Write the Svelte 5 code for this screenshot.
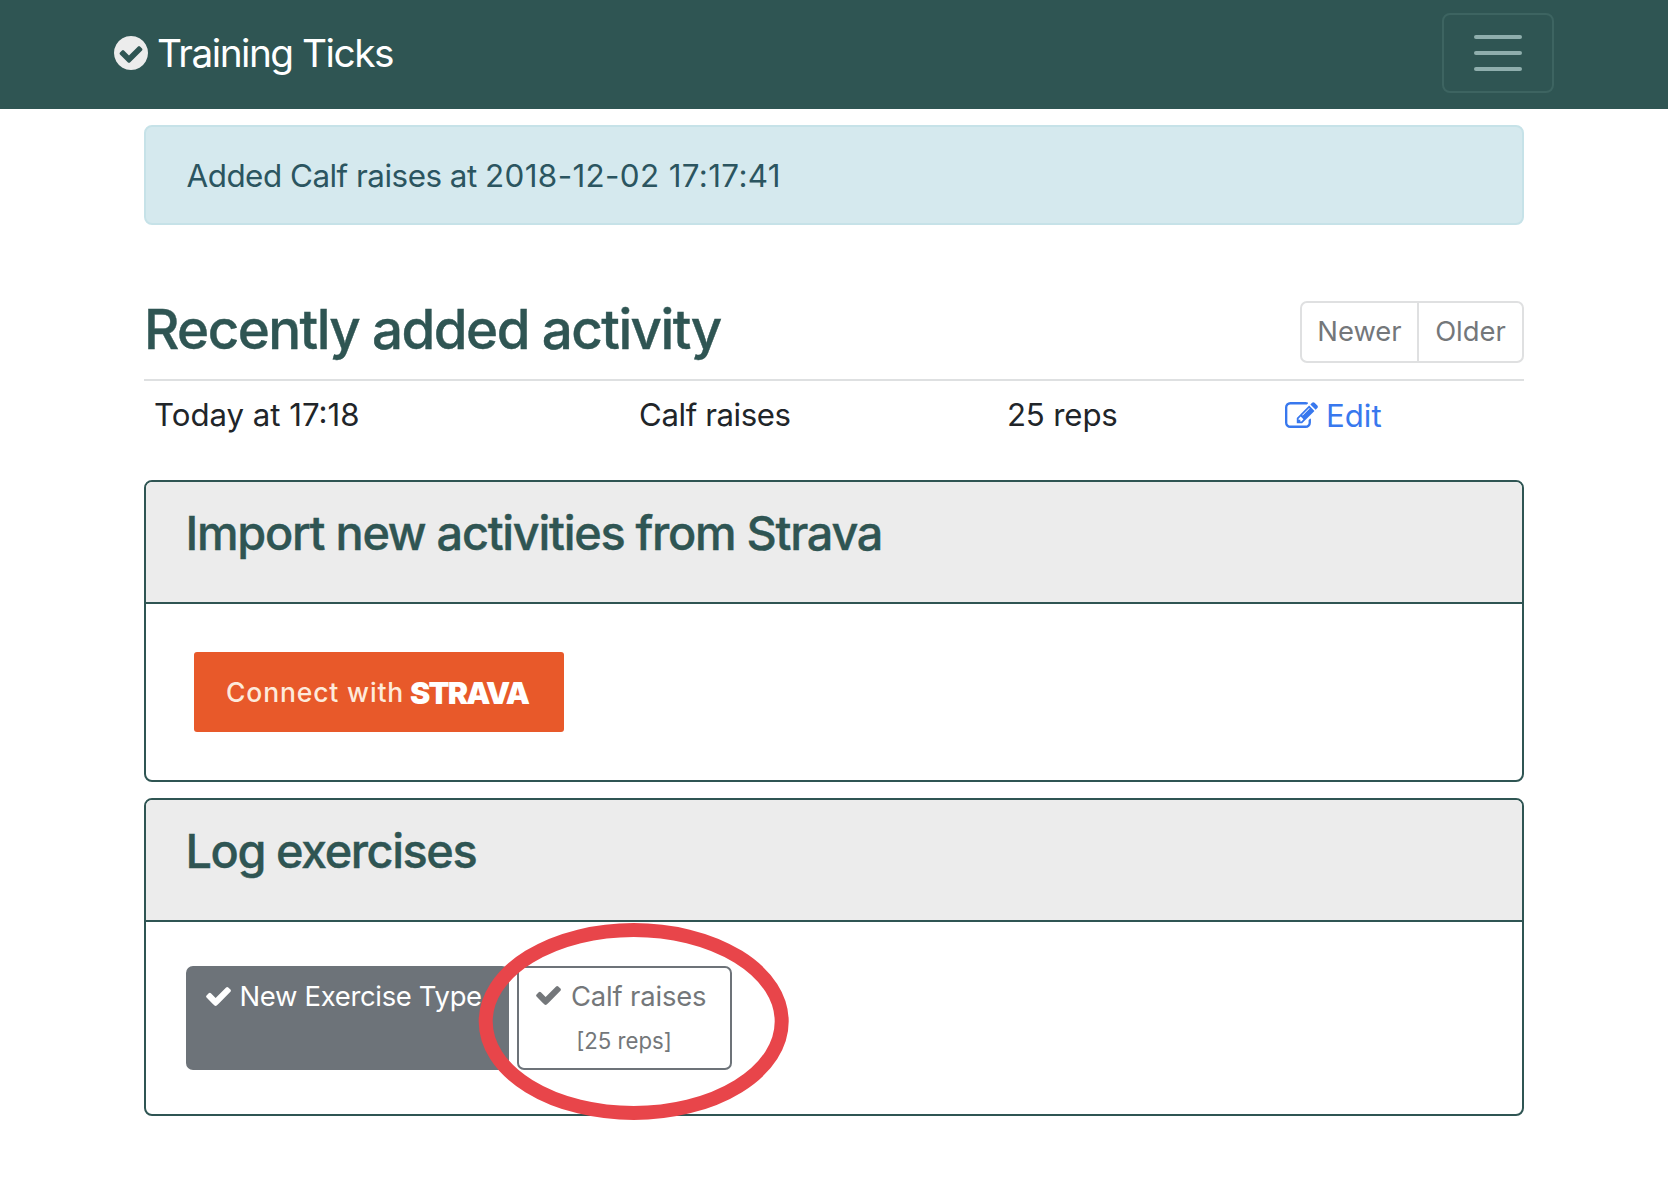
<script>
  const activity = { when: 'Today at 17:18', name: 'Calf raises', amount: '25 reps' };
</script>

{#snippet check()}
  <svg class="check" viewBox="121 334 1550 1188" aria-hidden="true">
    <path d="M1671 566q0 40-28 68l-724 724-136 136q-28 28-68 28t-68-28l-136-136-362-362q-28-28-28-68t28-68l136-136q28-28 68-28t68 28l294 295 656-657q28-28 68-28t68 28l136 136q28 28 28 68z" />
  </svg>
{/snippet}

<nav>
  <a class="brand">
    <svg viewBox="128 128 1536 1536" aria-hidden="true">
      <path d="M1412 734q0-28-18-46l-91-90q-19-19-45-19t-45 19l-408 407-226-226q-19-19-45-19t-45 19l-91 90q-18 18-18 46 0 27 18 45l362 362q19 19 45 19 27 0 46-19l543-543q18-18 18-45zm252 162q0 209-103 385.500t-279.500 279.500-385.500 103-385.500-103-279.500-279.500-103-385.500 103-385.500 279.500-279.500 385.500-103 385.500 103 279.500 279.500 103 385.500z" />
    </svg>
    <span>Training Ticks</span>
  </a>
  <button class="toggler" aria-label="Toggle navigation"><i></i><i></i><i></i></button>
</nav>

<main>
  <div class="alert"><span class="message">Added Calf raises at <span class="stamp">2018-12-02 17:17:41</span></span></div>

  <header class="recent">
    <h2><span>Recently added activity</span></h2>
    <div class="pager">
      <button><span>Newer</span></button>
      <button><span>Older</span></button>
    </div>
  </header>

  <div class="row">
    <span class="when">{activity.when}</span>
    <span class="name">{activity.name}</span>
    <span class="amount">{activity.amount}</span>
    <a class="edit">
      <svg viewBox="0 128 1792 1408" aria-hidden="true">
        <path d="M888 1184l116-116-152-152-116 116v56h96v96h56zm440-720q-16-16-33 1l-350 350q-17 17-1 33t33-1l350-350q17-17 1-33zm80 594v190q0 119-84.500 203.500t-203.500 84.500h-832q-119 0-203.500-84.500t-84.500-203.500v-832q0-119 84.500-203.500t203.500-84.500h832q63 0 117 25 15 7 18 23 3 17-9 29l-49 49q-14 14-32 8-23-6-45-6h-832q-66 0-113 47t-47 113v832q0 66 47 113t113 47h832q66 0 113-47t47-113v-126q0-13 9-22l64-64q15-15 35-7t20 29zm-96-738l288 288-672 672h-288v-288zm444 132l-92 92-288-288 92-92q28-28 68-28t68 28l152 152q28 28 28 68t-28 68z" />
      </svg>
      <span>Edit</span>
    </a>
  </div>

  <section class="card import">
    <h3><span>Import new activities from Strava</span></h3>
    <div class="body">
      <button class="strava"><span class="connect">Connect with</span><b>STRAVA</b></button>
    </div>
  </section>

  <section class="card log">
    <h3><span>Log exercises</span></h3>
    <div class="body">
      <button class="exercise solid">{@render check()}<span>New Exercise Type</span></button>
      <button class="exercise outline">
        <span class="top">{@render check()}<span>Calf raises</span></span>
        <small>[25 reps]</small>
      </button>
    </div>
    <svg class="ring" viewBox="0 0 312 198" aria-hidden="true">
      <ellipse cx="155.7" cy="99.5" rx="148" ry="91.5" />
    </svg>
  </section>
</main>

<style>
  :global(body) { margin: 0; background: #fff; }
  :global(#app) { font-family: Inter, 'Liberation Sans', sans-serif; color: #212529; }
  nav, main, nav *, main * { box-sizing: border-box; }
  button { font: inherit; margin: 0; padding: 0; background: none; border: 0; }
  span, small, b { white-space: nowrap; }

  nav { height: 109px; background: #2f5553; display: flex; align-items: flex-start; justify-content: space-between; padding: 13px 114px; }
  .brand { display: flex; align-items: center; gap: 9px; height: 80px; color: #fff; font-size: 38.8px; letter-spacing: -1.5px; }
  .brand svg { width: 34px; height: 34px; fill: #ececec; }
  .brand span { padding-bottom: 2px; }
  .toggler { width: 112px; height: 80px; border: 2px solid #3d6461; border-radius: 8px; display: flex; flex-direction: column; align-items: center; justify-content: center; gap: 12px; }
  .toggler i { width: 48px; height: 4px; border-radius: 2px; background: #8faead; }

  main { width: 1380px; margin: 16px auto 0; }
  .alert { height: 100px; border: 2px solid #c6e2e8; border-radius: 8px; background: #d5e9ee; color: #2b5560; padding-left: 40.5px; font-size: 31.4px; line-height: 99px; }
  .message { letter-spacing: -0.5px; }
  .stamp { letter-spacing: 0.35px; }

  .recent { height: 156px; padding-top: 76px; border-bottom: 2px solid #dee0e1; display: flex; justify-content: space-between; }
  h2, h3 { margin: 0; font-weight: 500; color: #2f5553; -webkit-text-stroke: 0.4px #2f5553; }
  h2 { font-size: 54.7px; line-height: 56px; letter-spacing: -1.57px; }
  .pager { display: flex; height: 62px; border: 2px solid #dfe0e1; border-radius: 7px; color: #74777a; font-size: 27.4px; letter-spacing: -0.15px; }
  .pager button { color: inherit; width: 115px; padding-bottom: 2px; }
  .pager button + button { width: 105px; border-left: 2px solid #dfe0e1; }

  .row { display: grid; grid-template-columns: 485px 368px 278px 1fr; height: 99px; padding-left: 10px; font-size: 31.2px; line-height: 69px; }
  .name { letter-spacing: -0.4px; }
  .amount { letter-spacing: -0.15px; }
  .edit { display: flex; align-items: center; gap: 8px; height: 71px; color: #3878ee; }
  .edit svg { width: 33px; height: 26px; margin-bottom: 4px; fill: #3878ee; }

  .card { position: relative; border: 2px solid #2f5553; border-radius: 8px; margin-bottom: 16px; }
  .import { height: 302px; }
  .log { height: 318px; }
  h3 { height: 122px; background: #ececec; border-bottom: 2px solid #2f5553; border-radius: 6px 6px 0 0; padding: 23px 0 0 39.5px; font-size: 46.8px; line-height: 57px; letter-spacing: -1.42px; }
  .import h3 { letter-spacing: -1.26px; }
  .import .body { padding: 48px; }
  .strava { width: 370px; height: 80px; border-radius: 3px; background: #e8592a; color: #fff; display: flex; align-items: center; padding-left: 32px; }
  .connect { font-size: 26.5px; color: #fdeadb; font-weight: 500; letter-spacing: 0.85px; width: 184px; text-align: left; }
  .strava b { font-size: 30.5px; font-weight: 900; letter-spacing: -1.8px; padding-top: 1px; }

  .log .body { display: flex; gap: 8px; padding: 44px 40px; }
  .exercise { height: 104px; border: 2px solid #6d7379; border-radius: 7px; font-size: 27.4px; letter-spacing: -0.15px; line-height: 34px; padding: 11px 0 0 17.5px; }
  .check { width: 25px; height: 19px; fill: currentColor; flex: none; }
  .solid { width: 323px; background: #6d7379; color: #fff; display: flex; gap: 9px; letter-spacing: -0.3px; }
  .solid .check { margin-top: 8px; }
  .outline { width: 215px; color: #74777a; padding: 10px 0 0 17px; }
  .top { display: flex; align-items: center; gap: 10px; }
  small { display: block; font-size: 22.2px; letter-spacing: 0; line-height: 55px; padding-right: 18px; }
  .ring { position: absolute; left: 332px; top: 122px; width: 312px; height: 198px; fill: none; stroke: #e8454a; stroke-width: 14; }
</style>
